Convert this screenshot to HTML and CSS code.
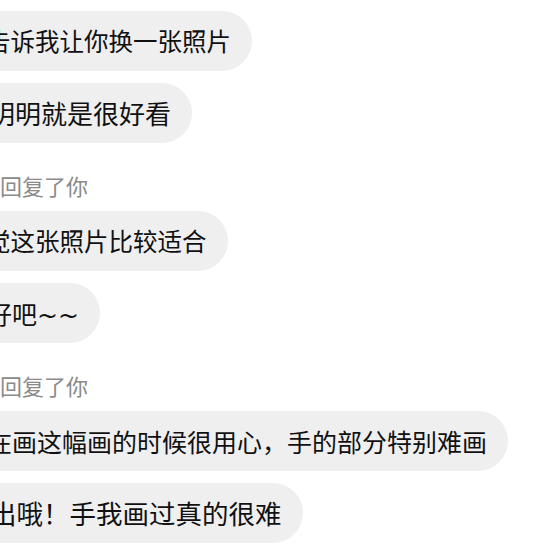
FILE: index.html
```html
<!DOCTYPE html>
<html lang="zh-CN">
<head>
    <meta charset="utf-8">
    <title>聊天记录</title>
    <link rel="stylesheet" href="styles.css">
</head>
<body>
    <div class="chat">
        <div class="msg"><span class="bubble bubble--sm">朋友告诉我让你换一张照片</span></div>
        <div class="msg"><span class="bubble bubble--lg">可是明明就是很好看</span></div>

        <div class="tip">林小雨回复了你</div>
        <div class="msg"><span class="bubble bubble--sm">我感觉这张照片比较适合</span></div>
        <div class="msg"><span class="bubble">嗯那好吧<span class="tilde">~~</span></span></div>

        <div class="tip">林小雨回复了你</div>
        <div class="msg"><span class="bubble">看你在画这幅画的时候很用心，手的部分特别难画</span></div>
        <div class="msg"><span class="bubble bubble--xl">看得出哦！手我画过真的很难</span></div>
    </div>
</body>
</html>
```

FILE: styles.css
```css
html, body {
    margin: 0;
    background: #fff;
    overflow: hidden;
}

body {
    font-family: "Noto Sans CJK SC", "Microsoft YaHei", sans-serif;
    color: #111;
}

.chat {
    display: flex;
    flex-direction: column;
    align-items: flex-start;
    gap: 12px;
    padding-top: 11px;
    margin-left: -83px;
}

.msg {
    display: flex;
}

.bubble {
    display: inline-block;
    height: 32px;
    background: #efeff0;
    border-radius: 30px;
    padding: 14px 21px 14px 20px;
    font-size: 25px;
    line-height: 32px;
    white-space: nowrap;
}

    .bubble--sm {
        font-size: 24.5px;
    }

    .bubble--lg {
        font-size: 26px;
    }

    .bubble--xl {
        font-size: 26.5px;
    }

.tilde {
    font-family: "DejaVu Sans", sans-serif;
    line-height: 1;
}

.tip {
    margin-top: 16px;
    padding-left: 17px;
    font-size: 22px;
    line-height: 28px;
    color: #8a8a8a;
}
```
